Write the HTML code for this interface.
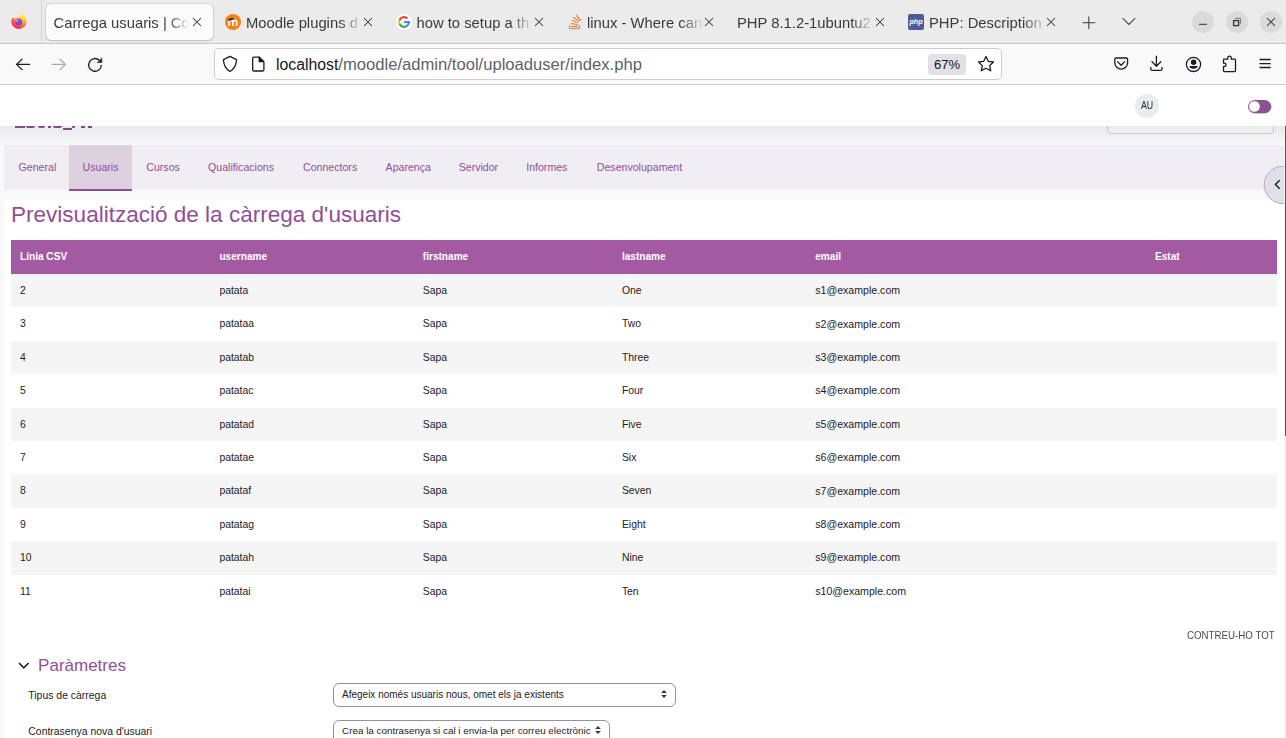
<!DOCTYPE html>
<html><head><meta charset="utf-8">
<style>
*{box-sizing:border-box;margin:0;padding:0}
html,body{width:1286px;height:738px;overflow:hidden;background:#f8f9fa;font-family:"Liberation Sans",sans-serif;position:relative}
.a{position:absolute}
.t0{line-height:0;white-space:nowrap}
.act{background:#fbfbfb;border-radius:5px;box-shadow:0 0 1.5px rgba(0,0,0,.35),0 1px 2px rgba(0,0,0,.12)}
.tt{top:14px;height:18px;font-size:14.8px;line-height:18px;color:#3b3b3b;white-space:nowrap;overflow:hidden;-webkit-mask-image:linear-gradient(to left,transparent 0,#000 22px)}
</style></head><body>
<!-- TAB STRIP -->
<div class="a" style="left:0;top:0;width:1286px;height:43px;background:#ebebeb"></div>
<div class="a" style="left:0;top:43px;width:1286px;height:1px;background:#c9c9c9"></div>
<div class="a" style="left:41px;top:0;width:1px;height:43px;background:#d2d2d2"></div>
<svg class="a" style="left:11px;top:14px" width="16" height="16" viewBox="0 0 16 16">
 <defs><radialGradient id="ff" cx="0.75" cy="0.1" r="1.05"><stop offset="0" stop-color="#fff44f"/><stop offset="0.3" stop-color="#ffd02e"/><stop offset="0.55" stop-color="#ff8a1f"/><stop offset="0.8" stop-color="#ff3a55"/><stop offset="1" stop-color="#e3157f"/></radialGradient>
 <radialGradient id="fp" cx="0.5" cy="0.2" r="0.9"><stop offset="0" stop-color="#b845ee"/><stop offset="1" stop-color="#5148d8"/></radialGradient></defs>
 <path d="M10.3 0c2.9 1.2 5.3 4 5.3 7.9A7.7 7.7 0 0 1 .3 8.2C.3 6.4 1 4.8 2 3.6c.7.2 1.3.8 1.6 1.4C4.6 4 6 3.3 7.4 3.5 8.3 2.2 9.9 1.6 10.3 0z" fill="url(#ff)"/>
 <circle cx="7.8" cy="7.9" r="3.5" fill="url(#fp)"/>
 <path d="M4.2 6.2c.8-.6 2-.7 2.9-.2-.5.5-.7 1.3-.4 2-.9.1-1.8-.2-2.5-.8z" fill="#ff9f2a"/>
</svg>
<!-- active tab -->
<div class="a act" style="left:46px;top:4px;width:167px;height:36px"></div>
<div class="a tt" style="left:53.5px;width:136.5px">Carrega usuaris | Con</div>
<!-- other tabs -->
<svg class="a" style="left:225px;top:14px" width="16" height="16" viewBox="0 0 16 16"><circle cx="8" cy="8" r="8" fill="#f98012"/><path d="M4 12V8.3c0-1.2.8-1.9 1.9-1.9s1.9.7 1.9 1.9V12M7.8 12V8.3c0-1.2.8-1.9 1.9-1.9s1.9.7 1.9 1.9V12" stroke="#fff" stroke-width="1.7" fill="none"/><path d="M2.3 5.6 7 3.6l2.3 1.5-4.6 1.8z" fill="#333"/></svg>
<div class="a tt" style="left:246px;width:116px">Moodle plugins d</div>
<svg class="a" style="left:396px;top:14px" width="16" height="16" viewBox="0 0 16 16"><circle cx="8" cy="8" r="8" fill="#fff"/><g fill="none" stroke-width="2.1"><path d="M11.46 4.54A4.9 4.9 0 0 0 3.39 6.32" stroke="#ea4335"/><path d="M3.39 6.32A4.9 4.9 0 0 0 3.56 10.07" stroke="#fbbc05"/><path d="M3.56 10.07A4.9 4.9 0 0 0 11.46 11.46" stroke="#34a853"/><path d="M11.46 11.46A4.9 4.9 0 0 0 12.9 8" stroke="#4285f4"/></g><rect x="8" y="7" width="5.95" height="2.05" fill="#4285f4"/></svg>
<div class="a tt" style="left:416.5px;width:116.5px">how to setup a th</div>
<svg class="a" style="left:564px;top:10px" width="24" height="24" viewBox="0 0 24 24"><path d="M5.5 15v3.6h10.1V15" stroke="#a3a6aa" stroke-width="1.2" fill="none"/><g stroke="#f48024" stroke-width="1.25" stroke-linecap="round"><path d="M7.3 16.6h6.6M7.4 13.6l6.2 .9M8.3 10.5l5.3 2M9.6 7.6l5.1 3.5M12.5 5.3l4 5"/></g></svg>
<div class="a tt" style="left:587px;width:117px">linux - Where can</div>
<div class="a tt" style="left:737px;width:137px">PHP 8.1.2-1ubuntu2.</div>
<svg class="a" style="left:908px;top:14px" width="16" height="16" viewBox="0 0 16 16"><rect width="16" height="16" rx="2" fill="#4f5b93"/><text x="8" y="10.2" font-family="Liberation Sans" font-style="italic" font-weight="bold" font-size="7.2" fill="#fff" text-anchor="middle">php</text></svg>
<div class="a tt" style="left:929px;width:117px">PHP: Description</div>
<!-- close x's -->
<svg class="a" style="left:0;top:0" width="1286" height="44" stroke="#3b3b3b" stroke-width="1.05" fill="none">
 <path d="M193 18l8 8M201 18l-8 8"/>
 <path d="M364 18l8 8M372 18l-8 8"/>
 <path d="M535 18l8 8M543 18l-8 8"/>
 <path d="M705 18l8 8M713 18l-8 8"/>
 <path d="M876 18l8 8M884 18l-8 8"/>
 <path d="M1047 18l8 8M1055 18l-8 8"/>
 <path d="M1082.5 22.7h12.7M1088.8 16.4v12.7"/>
 <path d="M1122.5 18l6.4 6.4 6.4-6.4"/>
 <circle cx="1203" cy="22" r="11" fill="#dadada" stroke="none"/>
 <circle cx="1237" cy="22" r="11" fill="#dadada" stroke="none"/>
 <circle cx="1271" cy="22" r="11" fill="#dadada" stroke="none"/>
 <path d="M1199 24.3h8"/>
 <rect x="1233.6" y="20.6" width="5" height="5" stroke-width="1.4"/>
 <path d="M1235.1 18.4h5.5v5.4" stroke="#707070" stroke-width=".9"/>
 <path d="M1267 18l8 8M1275 18l-8 8"/>
</svg>
<!-- TOOLBAR -->
<div class="a" style="left:0;top:44px;width:1286px;height:40px;background:#f9f9fa"></div>
<div class="a" style="left:0;top:84px;width:1286px;height:1px;background:#cfcfd2"></div>
<svg class="a" style="left:0;top:44px" width="1286" height="40" fill="none" stroke="#1c1b22" stroke-width="1.3" stroke-linecap="round" stroke-linejoin="round">
 <path d="M16.5 20.4h13M22 15.2l-5.5 5.2 5.5 5.2"/>
 <path d="M52 20.4h13M60 15.2l5.5 5.2-5.5 5.2" stroke="#a9a9ad"/>
 <path d="M101.35 20.9A6.35 6.35 0 1 1 99.3 16.2" stroke-linecap="butt"/>
 <path d="M97.4 18.6h4.5v-4.4z" fill="#1c1b22" stroke-width=".5"/>
</svg>
<div class="a" style="left:214px;top:48px;width:788px;height:32px;background:#fff;border:1px solid #cbcbd0;border-radius:5px"></div>
<svg class="a" style="left:0;top:44px" width="1286" height="40" fill="none" stroke="#1c1b22" stroke-width="1.3" stroke-linecap="round" stroke-linejoin="round">
 <path d="M230 12.3l6.5 3.4c0 5-2 8.8-6.5 11.8-4.5-3-6.5-6.8-6.5-11.8z"/>
 <path d="M259.2 13.2h-5.3a1.2 1.2 0 0 0-1.2 1.2v11.4a1.2 1.2 0 0 0 1.2 1.2h8.8a1.2 1.2 0 0 0 1.2-1.2v-8.2z"/>
 <path d="M259.2 13.2v4.4h4.1z" fill="#1c1b22"/>
 <path d="M986 12.5l2.3 4.8 5.2.7-3.8 3.6 1 5.2-4.7-2.5-4.7 2.5 1-5.2-3.8-3.6 5.2-.7z"/>
 <path d="M1114.8 15.5a1.5 1.5 0 0 1 1.5-1.5h9.8a1.5 1.5 0 0 1 1.5 1.5v3.3a6.4 6.4 0 0 1-12.8 0z"/>
 <path d="M1117.6 17.6l3.5 3.6 3.5-3.6"/>
 <path d="M1156.4 12.2v10M1152 17.8l4.4 4.4 4.4-4.4M1150.8 23.3v1.6a1.4 1.4 0 0 0 1.4 1.4h8.4a1.4 1.4 0 0 0 1.4-1.4v-1.6"/>
 <circle cx="1193.5" cy="20.4" r="7.1"/>
 <circle cx="1193.6" cy="18.3" r="2.1" fill="#1c1b22"/>
 <path d="M1189.4 22h8.2a4.1 2.7 0 0 1-8.2 0z" fill="#1c1b22" stroke="none"/>
 <path d="M1227.7 15.2h-3.4a.8.8 0 0 0-.8.8v3.2h.9a1.6 1.6 0 0 1 0 3.2h-.9v4.4a.8.8 0 0 0 .8.8h10.4a.8.8 0 0 0 .8-.8v-10.8a.8.8 0 0 0-.8-.8h-3.4v-1.2a1.8 1.8 0 0 0-3.6 0z"/>
 <path d="M1259.5 15.5h11.2M1259.5 19.6h11.2M1259.5 23.5h11.2" stroke-linecap="butt"/>
</svg>
<div class="a" style="left:928px;top:54px;width:38px;height:21px;background:#e0e0e6;border-radius:4px"></div>
<div class="a" style="left:928px;top:57px;width:38px;text-align:center;font-size:13px;line-height:15px;color:#15141a">67%</div>
<div class="a" style="left:276px;top:56px;font-size:15.8px;line-height:18px;color:#15141a;white-space:nowrap">localhost<span style="color:#5f5f66;font-size:16.6px">/moodle/admin/tool/uploaduser/index.php</span></div>

<div class="a" style="left:0;top:85px;width:1286px;height:653px;background:#f8f9fa"></div>
<div class="a" style="left:15.2px;top:126px;width:9.5px;height:1.8px;background:#8a4f92;border-radius:0 0 0px 0px"></div>
<div class="a" style="left:26.4px;top:126px;width:8.8px;height:1.8px;background:#8a4f92;border-radius:0 0 3px 3px"></div>
<div class="a" style="left:38px;top:126px;width:7.3px;height:1.8px;background:#8a4f92;border-radius:0 0 3px 3px"></div>
<div class="a" style="left:48.1px;top:126px;width:2.8px;height:1.8px;background:#8a4f92;border-radius:0 0 0px 0px"></div>
<div class="a" style="left:53px;top:126px;width:9.1px;height:1.8px;background:#8a4f92;border-radius:0 0 2px 2px"></div>
<div class="a" style="left:62.8px;top:128.2px;width:9.1px;height:1.7px;background:#8a4f92;border-radius:0 0 0px 0px"></div>
<div class="a" style="left:71.9px;top:126px;width:3.2px;height:1.8px;background:#8a4f92;border-radius:0 0 1px 1px"></div>
<div class="a" style="left:81px;top:126px;width:3.9px;height:1.8px;background:#8a4f92;border-radius:0 0 0px 0px"></div>
<div class="a" style="left:88.4px;top:126px;width:3.5px;height:1.8px;background:#8a4f92;border-radius:0 0 0px 0px"></div>
<div class="a" style="left:1107px;top:110px;width:167px;height:24px;background:#fbfbfb;border:1px solid #cfd1d4;border-radius:4px"></div>
<div class="a" style="left:0;top:85px;width:1286px;height:41px;background:#fff"></div>
<div class="a" style="left:0;top:126px;width:1284px;height:20px;background:linear-gradient(rgba(0,0,0,.062),rgba(0,0,0,0))"></div>
<div class="a" style="left:1135px;top:93.5px;width:24px;height:24px;border-radius:50%;background:#e9ecef"></div>
<div class="a t0" style="left:1140.9px;top:105.19px;font-size:11px;color:#1d2125;transform:scaleX(.8);transform-origin:0 0">AU</div>
<svg class="a" style="left:1246px;top:98px" width="28" height="17"><rect x="2.5" y="2.5" width="22.4" height="12.4" rx="6.2" fill="#8c5190" stroke="#8c5190" stroke-width="1"/><circle cx="8.4" cy="8.4" r="5.4" fill="#fff"/></svg>
<div class="a" style="left:4px;top:145px;width:1280px;height:45px;background:#f0eef3"></div>
<div class="a" style="left:69px;top:145px;width:63px;height:44px;background:#ddd1e0"></div>
<div class="a" style="left:69px;top:189px;width:63px;height:2px;background:#8f4f97"></div>
<div class="a t0" style="left:18.6px;top:167.33px;font-size:10.6px;color:#8f4f97;">General</div>
<div class="a t0" style="left:82.6px;top:167.33px;font-size:10.6px;color:#8f4f97;">Usuaris</div>
<div class="a t0" style="left:146.3px;top:167.33px;font-size:10.6px;color:#8f4f97;">Cursos</div>
<div class="a t0" style="left:208.1px;top:167.33px;font-size:10.6px;color:#8f4f97;">Qualificacions</div>
<div class="a t0" style="left:303px;top:167.33px;font-size:10.6px;color:#8f4f97;">Connectors</div>
<div class="a t0" style="left:385.6px;top:167.33px;font-size:10.6px;color:#8f4f97;">Aparença</div>
<div class="a t0" style="left:458.7px;top:167.33px;font-size:10.6px;color:#8f4f97;">Servidor</div>
<div class="a t0" style="left:526.2px;top:167.33px;font-size:10.6px;color:#8f4f97;">Informes</div>
<div class="a t0" style="left:596.8px;top:167.33px;font-size:10.6px;color:#8f4f97;">Desenvolupament</div>
<div class="a" style="left:4px;top:200px;width:1280px;height:538px;background:#fff"></div>
<div class="a t0" style="left:11px;top:214.69px;font-size:22.54px;color:#8f4f97;">Previsualització de la càrrega d'usuaris</div>
<div class="a" style="left:11px;top:240px;width:1266px;height:34px;background:#a45aa3"></div>
<div class="a t0" style="left:20px;top:256.50px;font-size:10.1px;color:#fff;font-weight:bold;">Línia CSV</div>
<div class="a t0" style="left:219.4px;top:256.50px;font-size:10.1px;color:#fff;font-weight:bold;">username</div>
<div class="a t0" style="left:422.8px;top:256.50px;font-size:10.1px;color:#fff;font-weight:bold;">firstname</div>
<div class="a t0" style="left:621.9px;top:256.50px;font-size:10.1px;color:#fff;font-weight:bold;">lastname</div>
<div class="a t0" style="left:815.2px;top:256.50px;font-size:10.1px;color:#fff;font-weight:bold;">email</div>
<div class="a t0" style="left:1155px;top:256.50px;font-size:10.1px;color:#fff;font-weight:bold;">Estat</div>
<div class="a" style="left:11px;top:274.00px;width:1266px;height:33.4px;background:#f5f5f5"></div>
<div class="a t0" style="left:20px;top:291.00px;font-size:10.4px;color:#1d2125;">2</div>
<div class="a t0" style="left:219.4px;top:291.00px;font-size:10.4px;color:#1d2125;">patata</div>
<div class="a t0" style="left:422.8px;top:291.00px;font-size:10.4px;color:#1d2125;">Sapa</div>
<div class="a t0" style="left:621.9px;top:291.00px;font-size:10.4px;color:#1d2125;">One</div>
<div class="a t0" style="left:815.2px;top:290.23px;font-size:10.6px;color:#1d2125;">s1@example.com</div>
<div class="a t0" style="left:20px;top:324.40px;font-size:10.4px;color:#1d2125;">3</div>
<div class="a t0" style="left:219.4px;top:324.40px;font-size:10.4px;color:#1d2125;">patataa</div>
<div class="a t0" style="left:422.8px;top:324.40px;font-size:10.4px;color:#1d2125;">Sapa</div>
<div class="a t0" style="left:621.9px;top:324.40px;font-size:10.4px;color:#1d2125;">Two</div>
<div class="a t0" style="left:815.2px;top:323.63px;font-size:10.6px;color:#1d2125;">s2@example.com</div>
<div class="a" style="left:11px;top:340.80px;width:1266px;height:33.4px;background:#f5f5f5"></div>
<div class="a t0" style="left:20px;top:357.80px;font-size:10.4px;color:#1d2125;">4</div>
<div class="a t0" style="left:219.4px;top:357.80px;font-size:10.4px;color:#1d2125;">patatab</div>
<div class="a t0" style="left:422.8px;top:357.80px;font-size:10.4px;color:#1d2125;">Sapa</div>
<div class="a t0" style="left:621.9px;top:357.80px;font-size:10.4px;color:#1d2125;">Three</div>
<div class="a t0" style="left:815.2px;top:357.03px;font-size:10.6px;color:#1d2125;">s3@example.com</div>
<div class="a t0" style="left:20px;top:391.20px;font-size:10.4px;color:#1d2125;">5</div>
<div class="a t0" style="left:219.4px;top:391.20px;font-size:10.4px;color:#1d2125;">patatac</div>
<div class="a t0" style="left:422.8px;top:391.20px;font-size:10.4px;color:#1d2125;">Sapa</div>
<div class="a t0" style="left:621.9px;top:391.20px;font-size:10.4px;color:#1d2125;">Four</div>
<div class="a t0" style="left:815.2px;top:390.43px;font-size:10.6px;color:#1d2125;">s4@example.com</div>
<div class="a" style="left:11px;top:407.60px;width:1266px;height:33.4px;background:#f5f5f5"></div>
<div class="a t0" style="left:20px;top:424.60px;font-size:10.4px;color:#1d2125;">6</div>
<div class="a t0" style="left:219.4px;top:424.60px;font-size:10.4px;color:#1d2125;">patatad</div>
<div class="a t0" style="left:422.8px;top:424.60px;font-size:10.4px;color:#1d2125;">Sapa</div>
<div class="a t0" style="left:621.9px;top:424.60px;font-size:10.4px;color:#1d2125;">Five</div>
<div class="a t0" style="left:815.2px;top:423.83px;font-size:10.6px;color:#1d2125;">s5@example.com</div>
<div class="a t0" style="left:20px;top:458.00px;font-size:10.4px;color:#1d2125;">7</div>
<div class="a t0" style="left:219.4px;top:458.00px;font-size:10.4px;color:#1d2125;">patatae</div>
<div class="a t0" style="left:422.8px;top:458.00px;font-size:10.4px;color:#1d2125;">Sapa</div>
<div class="a t0" style="left:621.9px;top:458.00px;font-size:10.4px;color:#1d2125;">Six</div>
<div class="a t0" style="left:815.2px;top:457.23px;font-size:10.6px;color:#1d2125;">s6@example.com</div>
<div class="a" style="left:11px;top:474.40px;width:1266px;height:33.4px;background:#f5f5f5"></div>
<div class="a t0" style="left:20px;top:491.40px;font-size:10.4px;color:#1d2125;">8</div>
<div class="a t0" style="left:219.4px;top:491.40px;font-size:10.4px;color:#1d2125;">patataf</div>
<div class="a t0" style="left:422.8px;top:491.40px;font-size:10.4px;color:#1d2125;">Sapa</div>
<div class="a t0" style="left:621.9px;top:491.40px;font-size:10.4px;color:#1d2125;">Seven</div>
<div class="a t0" style="left:815.2px;top:490.63px;font-size:10.6px;color:#1d2125;">s7@example.com</div>
<div class="a t0" style="left:20px;top:524.80px;font-size:10.4px;color:#1d2125;">9</div>
<div class="a t0" style="left:219.4px;top:524.80px;font-size:10.4px;color:#1d2125;">patatag</div>
<div class="a t0" style="left:422.8px;top:524.80px;font-size:10.4px;color:#1d2125;">Sapa</div>
<div class="a t0" style="left:621.9px;top:524.80px;font-size:10.4px;color:#1d2125;">Eight</div>
<div class="a t0" style="left:815.2px;top:524.03px;font-size:10.6px;color:#1d2125;">s8@example.com</div>
<div class="a" style="left:11px;top:541.20px;width:1266px;height:33.4px;background:#f5f5f5"></div>
<div class="a t0" style="left:20px;top:558.20px;font-size:10.4px;color:#1d2125;">10</div>
<div class="a t0" style="left:219.4px;top:558.20px;font-size:10.4px;color:#1d2125;">patatah</div>
<div class="a t0" style="left:422.8px;top:558.20px;font-size:10.4px;color:#1d2125;">Sapa</div>
<div class="a t0" style="left:621.9px;top:558.20px;font-size:10.4px;color:#1d2125;">Nine</div>
<div class="a t0" style="left:815.2px;top:557.43px;font-size:10.6px;color:#1d2125;">s9@example.com</div>
<div class="a t0" style="left:20px;top:591.60px;font-size:10.4px;color:#1d2125;">11</div>
<div class="a t0" style="left:219.4px;top:591.60px;font-size:10.4px;color:#1d2125;">patatai</div>
<div class="a t0" style="left:422.8px;top:591.60px;font-size:10.4px;color:#1d2125;">Sapa</div>
<div class="a t0" style="left:621.9px;top:591.60px;font-size:10.4px;color:#1d2125;">Ten</div>
<div class="a t0" style="left:815.2px;top:590.83px;font-size:10.6px;color:#1d2125;">s10@example.com</div>
<div class="a t0" style="left:1186.7px;top:635.32px;font-size:11.5px;color:#474c52;transform:scaleX(.845);transform-origin:0 0">CONTREU-HO TOT</div>
<svg class="a" style="left:16px;top:660px" width="14" height="11"><path d="M3 3l4.8 4.8L12.6 3" stroke="#1d2125" stroke-width="1.6" fill="none"/></svg>
<div class="a t0" style="left:38.1px;top:665.91px;font-size:17px;color:#8f4f97;">Paràmetres</div>
<div class="a t0" style="left:28.3px;top:695.98px;font-size:10.45px;color:#1d2125;">Tipus de càrrega</div>
<div class="a t0" style="left:28.3px;top:731.98px;font-size:10.45px;color:#1d2125;">Contrasenya nova d'usuari</div>
<div class="a" style="left:333px;top:683px;width:343px;height:24px;border:1px solid #8f959e;border-radius:6px;background:#fff"></div>
<div class="a t0" style="left:342px;top:695.24px;font-size:10px;color:#1d2125;">Afegeix només usuaris nous, omet els ja existents</div>
<div class="a" style="left:333px;top:719.5px;width:277px;height:30px;border:1px solid #8f959e;border-radius:6px;background:#fff"></div>
<div class="a t0" style="left:342px;top:731.07px;font-size:9.9px;color:#1d2125;">Crea la contrasenya si cal i envia-la per correu electrònic</div>
<svg class="a" style="left:660px;top:689.4px" width="8" height="10"><path d="M1.1 4.1L4 1 6.9 4.1zM1.1 5.9L4 9 6.9 5.9z" fill="#343a40"/></svg>
<svg class="a" style="left:594px;top:725.4px" width="8" height="10"><path d="M1.1 4.1L4 1 6.9 4.1zM1.1 5.9L4 9 6.9 5.9z" fill="#343a40"/></svg>
<svg class="a" style="left:1262px;top:164px" width="24" height="42"><circle cx="20.85" cy="20.9" r="18.6" fill="#dee2e6" stroke="#c4a3c8" stroke-width="1"/><path d="M17.7 16.2l-4.3 4.3 4.3 4.3" stroke="#1d2125" stroke-width="1.5" fill="none"/></svg>
<div class="a" style="left:1284px;top:126px;width:2px;height:612px;background:#f3f3f4"></div>
<div class="a" style="left:1284.5px;top:126px;width:1.5px;height:310px;background:#555"></div>
</body></html>
